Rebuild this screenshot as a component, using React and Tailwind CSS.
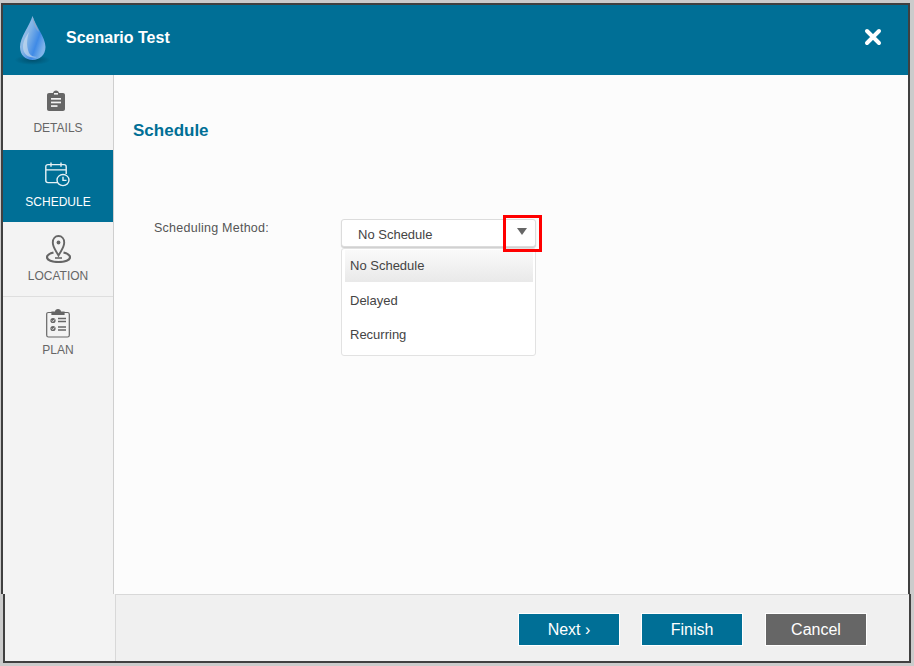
import React from "react";

const teal = "bg-[#006f96]";

const DropIcon = () => (
  <svg width="38" height="50" viewBox="-2 0 38 50">
    <defs>
      <linearGradient id="dropFill" x1="0" y1="0" x2="1" y2="0.6">
        <stop offset="0" stopColor="#b6cfe6" />
        <stop offset="0.45" stopColor="#7fb2e6" />
        <stop offset="0.75" stopColor="#3f8ae6" />
        <stop offset="1" stopColor="#7fb4ea" />
      </linearGradient>
      <radialGradient id="dropShadow" cx="0.5" cy="0.5" r="0.5">
        <stop offset="0" stopColor="#003a52" stopOpacity="0.6" />
        <stop offset="1" stopColor="#003a52" stopOpacity="0" />
      </radialGradient>
    </defs>
    <ellipse cx="16.5" cy="45" rx="18" ry="5" fill="url(#dropShadow)" />
    <path d="M16.5 1 C19 10 29.5 22 29.5 32 C29.5 40 23.5 45 16.5 45 C9.5 45 4 40 4 32 C4 22 14 10 16.5 1 Z" fill="url(#dropFill)" />
    <path d="M16.5 1 C18 7 21 12 23 17 C19 13 17 8 16.5 1 Z" fill="#8fa9c6" />
    <path d="M7 32 C7 26 10 21 13 17 C11 24 10 30 13 38 C15 41 18 42 21 42 C14 44 7 40 7 32 Z" fill="#d2e1ee" opacity="0.6" />
  </svg>
);

const DetailsIcon = () => (
  <svg width="18" height="21" viewBox="0 0 18 21" className="mr-[5px]">
    <path d="M2 3 H6 C6.3 1.4 7.4 0.5 9 0.5 C10.6 0.5 11.7 1.4 12 3 H16 C17.2 3 18 3.8 18 5 V19 C18 20.2 17.2 21 16 21 H2 C0.8 21 0 20.2 0 19 V5 C0 3.8 0.8 3 2 3 Z" fill="#666" />
    <rect x="4" y="8" width="10" height="1.7" fill="#f3f3f3" />
    <rect x="4" y="11.6" width="10" height="1.7" fill="#f3f3f3" />
    <rect x="4" y="15.2" width="6.5" height="1.7" fill="#f3f3f3" />
    <rect x="7" y="3" width="4" height="1.6" fill="#f3f3f3" />
  </svg>
);

const CalendarIcon = () => (
  <svg width="25" height="25" viewBox="0 0 25 27" preserveAspectRatio="none" fill="none" stroke="#e8f2f6" strokeWidth="1.4" className="mr-[2px]">
    <path d="M13 22.3 H3 C1.6 22.3 0.8 21.4 0.8 20 V5 C0.8 3.6 1.6 2.8 3 2.8 H19 C20.4 2.8 21.2 3.6 21.2 5 V13" />
    <path d="M1 8.5 H21" />
    <path d="M6 0.5 V5 M16 0.5 V5" />
    <circle cx="18" cy="19.5" r="6" />
    <path d="M18 16 V19.8 H21.5" />
  </svg>
);

const LocationIcon = () => (
  <svg width="25" height="28" viewBox="0 0 25 28" fill="none" stroke="#666" strokeWidth="1.9">
    <path d="M12.5 20.5 C10 15.5 6.8 12.5 6.8 7.5 C6.8 3.6 9.2 1 12.5 1 C15.8 1 18.2 3.6 18.2 7.5 C18.2 12.5 15 15.5 12.5 20.5 Z" />
    <circle cx="12.5" cy="7.5" r="1.9" fill="#666" stroke="none" />
    <path d="M7.5 17.5 C3.5 18.5 1 20.2 1 22.3 C1 25 6 27 12.5 27 C19 27 24 25 24 22.3 C24 20.2 21.5 18.5 17.5 17.5" strokeWidth="2.2" />
    <path d="M9 23 H16" strokeWidth="1.6" />
  </svg>
);

const PlanIcon = () => (
  <svg width="24" height="29" viewBox="0 0 24 29" fill="none" stroke="#666" strokeWidth="1.2" className="mr-[1px]">
    <path d="M6 3.5 H2.5 C1.3 3.5 0.7 4.1 0.7 5.3 V26.2 C0.7 27.4 1.3 28 2.5 28 H21.5 C22.7 28 23.3 27.4 23.3 26.2 V5.3 C23.3 4.1 22.7 3.5 21.5 3.5 H18" />
    <path d="M6 5.5 H18 V3 H14.5 C14.3 1.5 13.4 0.7 12 0.7 C10.6 0.7 9.7 1.5 9.5 3 H6 Z" fill="#666" />
    <circle cx="7" cy="11.5" r="2.6" fill="#666" stroke="none" />
    <circle cx="7" cy="19.5" r="2.6" fill="#666" stroke="none" />
    <path d="M5.8 11.5 L6.8 12.5 L8.4 10.6 M5.8 19.5 L6.8 20.5 L8.4 18.6" stroke="#f3f3f3" strokeWidth="0.9" />
    <path d="M12 9.5 H20 M12 12.5 H20 M12 18 H20 M12 21 H20" strokeWidth="1.3" />
  </svg>
);

const NavItem = ({ label, active, border, height, iconBox, gap, icon }) => (
  <div
    className={`flex flex-col items-center ${height} ${active ? teal : ""} ${border ? "border-b border-[#dedede]" : ""}`}
  >
    <div className={`flex items-end ${iconBox}`}>{icon}</div>
    <span className={`text-[12px] leading-[14px] ${gap} ${active ? "text-white" : "text-[#666]"}`}>
      {label}
    </span>
  </div>
);

const Button = ({ label, color }) => (
  <button className={`flex h-[33px] w-[102px] items-center justify-center border border-white text-[16px] text-white ${color}`}>
    {label}
  </button>
);

export default function App() {
  return (
    <div className="h-[666px] w-[914px] overflow-hidden bg-[#cbcbcb] pt-[3px] font-['Liberation_Sans',Arial,sans-serif]">
      <div className="ml-[1px] mr-[3px] flex h-[591px] w-[909px] flex-col border-x-2 border-t-2 border-[#404040] bg-white">
        <div className={`flex h-[70px] items-center justify-between pl-[11px] pr-[26px] ${teal}`}>
          <div className="flex items-center gap-[14px]">
            <DropIcon />
            <span className="mb-[4px] text-[16px] font-bold text-white">Scenario Test</span>
          </div>
          <svg width="18" height="18" viewBox="0 0 18 18" className="mb-[7px]">
            <path d="M3 3 L15 15 M15 3 L3 15" stroke="#fff" strokeWidth="4" strokeLinecap="round" />
          </svg>
        </div>

        <div className="flex min-h-0 flex-1">
          <aside className="w-[111px] shrink-0 border-r border-[#cfcfcf] bg-[#f3f3f3]">
            <NavItem label="DETAILS" height="h-[75px]" iconBox="h-[36px]" gap="mt-[10px]" icon={<DetailsIcon />} />
            <NavItem label="SCHEDULE" height="h-[72px]" iconBox="h-[37px]" gap="mt-[8px]" active icon={<CalendarIcon />} />
            <NavItem label="LOCATION" height="h-[75px]" iconBox="h-[41px]" gap="mt-[6px]" border icon={<LocationIcon />} />
            <NavItem label="PLAN" height="h-[75px]" iconBox="h-[41px]" gap="mt-[5px]" icon={<PlanIcon />} />
          </aside>

          <main className="flex-1 bg-[#fcfcfc] pl-[19px]">
            <h2 className="mt-[46px] text-[17px] font-bold leading-[19px] text-[#006f96]">Schedule</h2>
            <div className="mt-[79px] flex pl-[21px]">
              <label className="w-[187px] pt-[2px] text-[12.5px] leading-[14px] tracking-[0.25px] text-[#555]">
                Scheduling Method:
              </label>
              <div className="relative w-[195px]">
                <div className="flex h-[28px] items-center justify-between rounded-[3px] border border-[#dcdcdc] bg-white pl-[16px] pr-[8px] pt-[2px] text-[13px] text-[#444] shadow-[0_1px_1px_#ccc]">
                  <span className="mt-[2px]">No Schedule</span>
                  <span className="mb-[6px] h-0 w-0 border-x-[5px] border-t-[7px] border-x-transparent border-t-[#666]" />
                </div>
                <div className="mt-[1px] flex h-[108px] flex-col rounded-[3px] border border-[#e2e2e2] bg-white pl-[3px] pr-[2px] pt-[1px] text-[13px] text-[#444]">
                  <div className="flex h-[32px] items-center bg-gradient-to-b from-[#fafafa] to-[#e9e9e9] pl-[5px]">No Schedule</div>
                  <div className="flex h-[36px] items-center pl-[5px] pt-[1px]">Delayed</div>
                  <div className="flex h-[33px] items-center pl-[5px]">Recurring</div>
                </div>
                <div className="absolute left-[162px] top-[-4px] h-[37px] w-[39px] border-[3px] border-[#ff0000]" />
              </div>
            </div>
          </main>
        </div>
      </div>

      <div className="ml-[3px] flex h-[69px] w-[908px] border-x-2 border-b-2 border-[#404040]">
        <div className="w-[110px] shrink-0 bg-[#f3f3f3]" />
        <div className="flex flex-1 justify-end gap-[21px] border-l border-t border-[#d8d8d8] bg-[#f0f0f0] pr-[42px] pt-[18px]">
          <Button label="Next ›" color={teal} />
          <Button label="Finish" color={teal} />
          <div className="ml-[1px]"><Button label="Cancel" color="bg-[#666]" /></div>
        </div>
      </div>
    </div>
  );
}
